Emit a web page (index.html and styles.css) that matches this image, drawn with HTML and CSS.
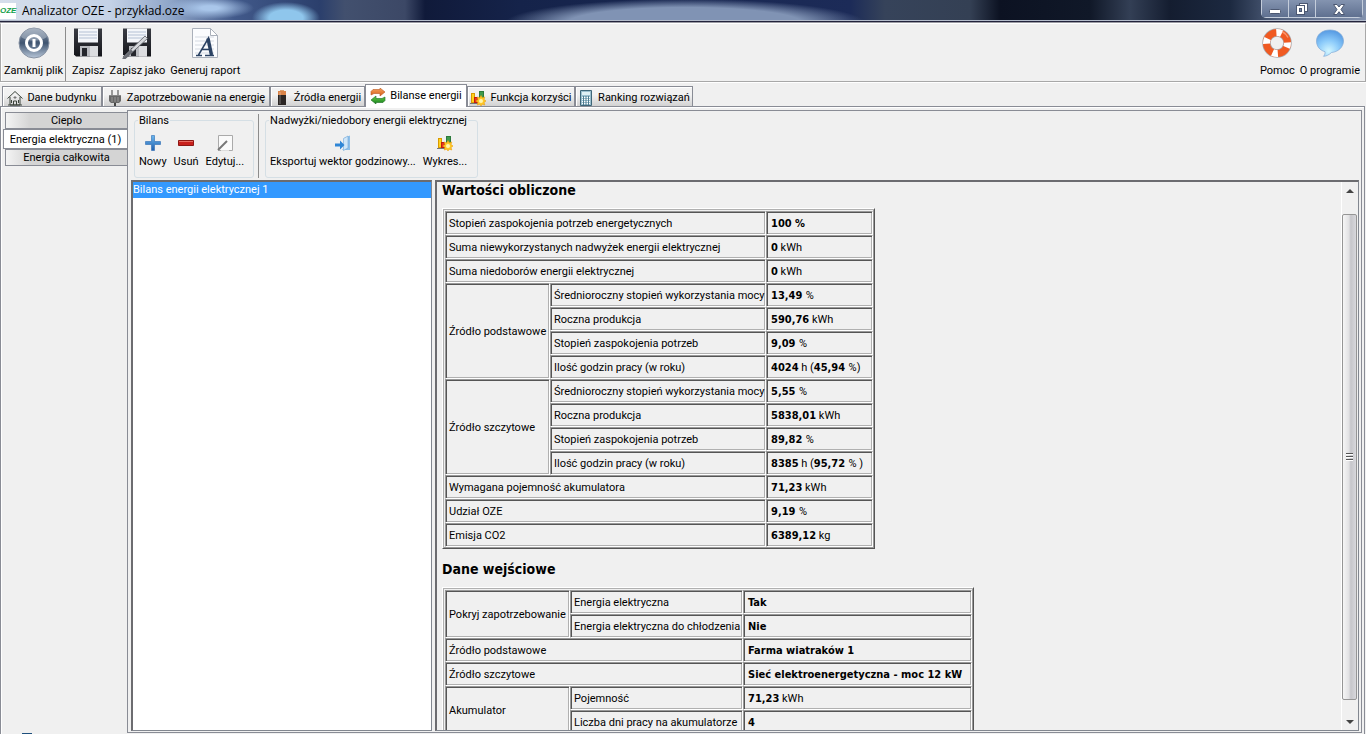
FILE: index.html
```html
<!DOCTYPE html>
<html lang="pl">
<head>
<meta charset="utf-8">
<title>Analizator OZE - przykład.oze</title>
<link rel="stylesheet" href="styles.css">
</head>
<body>
<svg class="defs" width="0" height="0" aria-hidden="true">
  <defs>
    <linearGradient id="steel" x1="0" y1="0" x2="0" y2="1"><stop offset="0" stop-color="#8e9bad"/><stop offset=".5" stop-color="#3f5470"/><stop offset="1" stop-color="#b7c6d8"/></linearGradient>
    <linearGradient id="disk" x1="0" y1="0" x2="0" y2="1"><stop offset="0" stop-color="#3a3c44"/><stop offset="1" stop-color="#15161b"/></linearGradient>
    <linearGradient id="orange" x1="0" y1="0" x2="0" y2="1"><stop offset="0" stop-color="#f6a35c"/><stop offset="1" stop-color="#d8601c"/></linearGradient>
    <linearGradient id="green" x1="0" y1="0" x2="0" y2="1"><stop offset="0" stop-color="#6ccf4a"/><stop offset="1" stop-color="#12801c"/></linearGradient>
    <linearGradient id="blue" x1="0" y1="0" x2="0" y2="1"><stop offset="0" stop-color="#6bb8ef"/><stop offset="1" stop-color="#1f5fae"/></linearGradient>
    <radialGradient id="bubble" cx=".45" cy=".8" r=".8"><stop offset="0" stop-color="#d2f6ff"/><stop offset=".5" stop-color="#8ccbfa"/><stop offset="1" stop-color="#5599e2"/></radialGradient>
    <symbol id="chart" viewBox="0 0 16 16">
      <path d="M0 13.500h12" stroke="#777" />
      <rect x="1.500" y="3.500" width="3" height="9" fill="#ffd21f" stroke="#d99a00"/>
      <rect x="4.500" y="7.500" width="3" height="5" fill="#e8391f" stroke="#c11a10"/>
      <rect x="9.500" y="1.500" width="4" height="9" fill="#3f9a4c" stroke="#2c7a3c"/>
      <path d="M11 5.500l1.200 2.300 2.600-.8-.8 2.500 2 1.500-2 1.500.8 2.500-2.600-.8L11 16l-1.200-1.800-2.600.8.800-2.500-2-1.500 2-1.500-.8-2.500 2.600.8z" fill="#ffc928" stroke="#eda010" stroke-width=".6"/>
      <circle cx="11" cy="11" r="2" fill="#fff6b0"/>
    </symbol>
    <symbol id="floppy" viewBox="0 0 32 32">
      <path d="M2 1.500h28v28H4l-2-2z" fill="url(#disk)"/>
      <path d="M6 1.500h20v14H6z" fill="#f4f6fa"/>
      <path d="M7 5h18M7 8h18M7 11h18" stroke="#b4c0d4"/>
      <path d="M8 19h18v10.500H8z" fill="#b9bbc0"/><path d="M10 21h5v8h-5z" fill="#24262c"/><path d="M18 19h8v10.500h-8z" fill="#dcdde0"/>
    </symbol>
  </defs>
</svg>

<div class="window">
  <header class="titlebar">
    <span class="app-icon">OZE</span>
    <h1 class="title">Analizator OZE - przykład.oze</h1>
    <div class="window-buttons">
      <button class="win-btn" aria-label="Minimalizuj"><svg width="14" height="14" viewBox="0 0 14 14"><rect x="1.500" y="7.500" width="11" height="4" rx="1" fill="#fff" stroke="#4c5872"/></svg></button>
      <button class="win-btn" aria-label="Przywróć"><svg width="14" height="14" viewBox="0 0 14 14" fill="#fff" stroke="#4c5872"><rect x="4.500" y="1.500" width="8" height="8"/><rect x="1.500" y="3.500" width="8" height="9"/><rect x="4.500" y="6.500" width="2" height="3" fill="#7385a5"/></svg></button>
      <button class="win-btn win-close" aria-label="Zamknij"><svg width="14" height="14" viewBox="0 0 14 14"><path d="M1.500 2.500h3.500l2 2.500 2-2.500h3.500L9 7.500l3.500 5H9l-2-2.800-2 2.800H1.500L5 7.500z" fill="#fff" stroke="#4c5872"/></svg></button>
    </div>
  </header>

  <nav class="toolbar">
    <button class="tool"><svg width="32" height="32" viewBox="0 0 32 32"><circle cx="16" cy="16" r="15" fill="url(#steel)" stroke="#8792a3"/><path d="M3 10a14 14 0 0 1 26 0c-8 5-18 5-26 0z" fill="#d3dae4" opacity=".4"/><circle cx="16" cy="16" r="7.500" fill="none" stroke="#fff" stroke-width="3"/><path d="M16 12v8" stroke="#fff" stroke-width="3"/></svg>Zamknij plik</button>
    <span class="divider"></span>
    <button class="tool"><svg width="32" height="32"><use href="#floppy"/></svg>Zapisz</button>
    <button class="tool"><svg width="32" height="32" viewBox="0 0 32 32"><use href="#floppy"/><path d="M2 30L24 9l2.500 2.500L5 31z" fill="#d6d8dc" stroke="#5a5d64" stroke-width=".8"/><path d="M1 31.500l9-9 2 2-8 8z" fill="#6a6d74"/></svg>Zapisz jako</button>
    <button class="tool"><svg width="32" height="32" viewBox="0 0 32 32"><path d="M3.500 1.500h18l7 7v22h-25z" fill="#fbfcfe" stroke="#aab0ba"/><path d="M21.500 1.500v7h7z" fill="#fff" stroke="#aab0ba"/><path d="M6 10h19M6 14h19M6 18h19M6 22h19M6 26h19" stroke="#d5dae2"/><path d="M7 28.500h6M16 28.500h9M9.500 28L19.500 11l2.500 17M12.500 22.500h8" fill="none" stroke="#2b4263" stroke-width="1.500"/><path d="M19 11.500L22.500 28" stroke="#2b4263" stroke-width="3.500"/></svg>Generuj raport</button>
    <span class="spacer"></span>
    <button class="tool"><svg width="32" height="32" viewBox="0 0 32 32"><circle cx="16" cy="16" r="10.500" fill="none" stroke="#a9a9ad" stroke-width="8.500"/><circle cx="16" cy="16" r="10.500" fill="none" stroke="#f05a22" stroke-width="7"/><circle cx="16" cy="16" r="10.500" fill="none" stroke="#fff" stroke-width="7" stroke-dasharray="5.500 10.993" stroke-dashoffset="1"/><path d="M21 4.500q4 2 6 6" fill="none" stroke="#ffb08c" stroke-width="1.500" opacity=".7"/></svg>Pomoc</button>
    <button class="tool"><svg width="32" height="32" viewBox="0 0 32 32"><path d="M16 3c8 0 13.500 4.800 13.500 11S24 25 17.500 25.500C15 28 12 29.300 9.500 29.300c1.300-1.300 1.800-3 1.500-4.600C6 23.400 2.500 19.500 2.500 14 2.500 7.800 8 3 16 3z" fill="url(#bubble)" stroke="#7fa9d6" stroke-width=".7"/></svg>O programie</button>
  </nav>

  <nav class="tabs">
    <button class="tab tab-a"><svg width="16" height="16" viewBox="0 0 16 16" fill="none" stroke="#3c453c"><path d="M.5 8.500L8 1.500l7.500 7M3 7v8h10V7M1 15h14"/><path d="M8 6v3M6.500 7.500h3" stroke="#777"/><path d="M6.500 15v-4h3v4M4.500 10v3M11.500 10v3"/></svg>Dane budynku</button>
    <button class="tab tab-b"><svg width="16" height="16" viewBox="0 0 16 16"><path d="M4 0h2v5H4zM10 0h2v5h-2z" fill="#999"/><path d="M2 5h12v6l-2 2H4l-2-2z" fill="#686868"/><path d="M2 5.500h12" stroke="#888"/><path d="M5 7v5M8 7v5M11 7v5" stroke="#999"/><path d="M7 13h2v3H7z" fill="#444"/></svg>Zapotrzebowanie na energię</button>
    <button class="tab tab-c"><svg width="16" height="16" viewBox="0 0 16 16"><path d="M6 0h4v2H6z" fill="#d8a070"/><path d="M4 1h8v4H4z" fill="#d98348"/><path d="M4 5h8v10H4z" fill="#2a2523"/><path d="M6 2v12" stroke="#fff" opacity=".35"/></svg>Źródła energii</button>
    <button class="tab tab-d active"><svg width="16" height="16" viewBox="0 0 16 16"><path d="M1 7V3.500L3 1.500h7V0l5 4-5 4V5.500H4z" fill="url(#orange)" stroke="#b8561e" stroke-width=".6"/><path d="M15 9v3.500l-2 2H6V16l-5-4 5-4v2.500h6z" fill="url(#green)" stroke="#1a6a1f" stroke-width=".6"/></svg>Bilanse energii</button>
    <button class="tab tab-e"><svg width="16" height="16"><use href="#chart"/></svg>Funkcja korzyści</button>
    <button class="tab tab-f"><svg width="16" height="16" viewBox="0 0 16 16"><path d="M2.500.5h11v15h-11z" fill="#9cc0cf" stroke="#3f6678"/><path d="M4 2h8v3H4z" fill="#e0f0f4"/><path d="M4 7.500h8M4 9.500h8M4 11.500h8M4 13.500h8" stroke="#fff"/><path d="M5.500 6v9M8 6v9M10.500 6v9" stroke="#4f7d90"/></svg>Ranking rozwiązań</button>
  </nav>

  <main class="page">
    <nav class="side">
      <button class="side-tab">Ciepło</button>
      <button class="side-tab side-active">Energia elektryczna (1)</button>
      <button class="side-tab">Energia całkowita</button>
      <span class="hint-dot"></span>
    </nav>

    <section class="content">
      <div class="groups">
        <fieldset class="group"><legend>Bilans</legend>
          <button class="action"><svg width="16" height="16" viewBox="0 0 16 16"><path d="M6.500.5h3v6h6v3h-6v6h-3v-6h-6v-3h6z" fill="url(#blue)" stroke="#2c6cb4" stroke-width=".6"/></svg>Nowy</button>
          <button class="action"><svg width="16" height="16" viewBox="0 0 16 16"><path d="M.5 5.500h15v5H.5z" fill="#c8201c" stroke="#8d1714"/><path d="M1 6.500h14" stroke="#e86a60"/></svg>Usuń</button>
          <button class="action"><svg width="16" height="16" viewBox="0 0 16 16"><path d="M1.500.5h14v15h-14z" fill="#fafafa" stroke="#aaa"/><path d="M1 15l9-9" stroke="#777" stroke-width="2"/><path d="M4 15.500h8" stroke="#ddd"/></svg>Edytuj...</button>
        </fieldset>
        <span class="divider"></span>
        <fieldset class="group"><legend>Nadwyżki/niedobory energii elektrycznej</legend>
          <button class="action"><svg width="16" height="16" viewBox="0 0 16 16"><path d="M9 3l6-2.500V15H7v-1l2 1.500z" fill="#8dbfe8"/><path d="M8.500 3.500L13 1v12l-4.500 2.500z" fill="#cfe6f8" stroke="#6ea6d8" stroke-width=".6"/><path d="M0 8.500h5V5.500l4.500 4.500L5 14.500v-3H0z" fill="#2f86d6"/></svg>Eksportuj wektor godzinowy...</button>
          <button class="action"><svg width="16" height="16"><use href="#chart"/></svg>Wykres...</button>
        </fieldset>
      </div>

      <div class="split">
        <ul class="list"><li class="selected">Bilans energii elektrycznej 1</li></ul>

        <div class="report">
          <article class="report-body">
            <h2>Wartości obliczone</h2>
            <table class="data computed">
              <colgroup><col class="c1"><col class="c2"><col class="c3"></colgroup>
              <tr><td colspan="2">Stopień zaspokojenia potrzeb energetycznych</td><td><b>100 %</b></td></tr>
              <tr><td colspan="2">Suma niewykorzystanych nadwyżek energii elektrycznej</td><td><b>0</b> kWh</td></tr>
              <tr><td colspan="2">Suma niedoborów energii elektrycznej</td><td><b>0</b> kWh</td></tr>
              <tr><td rowspan="4">Źródło podstawowe</td><td>Średnioroczny stopień wykorzystania mocy</td><td><b>13,49 </b>%</td></tr>
              <tr><td>Roczna produkcja</td><td><b>590,76</b> kWh</td></tr>
              <tr><td>Stopień zaspokojenia potrzeb</td><td><b>9,09 </b>%</td></tr>
              <tr><td>Ilość godzin pracy (w roku)</td><td><b>4024</b> h (<b>45,94 </b>%)</td></tr>
              <tr><td rowspan="4">Źródło szczytowe</td><td>Średnioroczny stopień wykorzystania mocy</td><td><b>5,55 </b>%</td></tr>
              <tr><td>Roczna produkcja</td><td><b>5838,01</b> kWh</td></tr>
              <tr><td>Stopień zaspokojenia potrzeb</td><td><b>89,82 </b>%</td></tr>
              <tr><td>Ilość godzin pracy (w roku)</td><td><b>8385</b> h (<b>95,72 </b>% )</td></tr>
              <tr><td colspan="2">Wymagana pojemność akumulatora</td><td><b>71,23</b> kWh</td></tr>
              <tr><td colspan="2">Udział OZE</td><td><b>9,19 </b>%</td></tr>
              <tr><td colspan="2">Emisja CO2</td><td><b>6389,12</b> kg</td></tr>
            </table>
            <h2>Dane wejściowe</h2>
            <table class="data input">
              <colgroup><col class="d1"><col class="d2"><col class="d3"></colgroup>
              <tr><td rowspan="2">Pokryj zapotrzebowanie</td><td>Energia elektryczna</td><td><b>Tak</b></td></tr>
              <tr><td>Energia elektryczna do chłodzenia</td><td><b>Nie</b></td></tr>
              <tr><td colspan="2">Źródło podstawowe</td><td><b>Farma wiatraków 1</b></td></tr>
              <tr><td colspan="2">Źródło szczytowe</td><td><b>Sieć elektroenergetyczna - moc 12 kW</b></td></tr>
              <tr><td rowspan="2">Akumulator</td><td>Pojemność</td><td><b>71,23</b> kWh</td></tr>
              <tr><td>Liczba dni pracy na akumulatorze</td><td><b>4</b></td></tr>
            </table>
          </article>
          <div class="scrollbar">
            <button class="arrow" aria-label="W górę"><svg width="8" height="4" viewBox="0 0 8 4"><path d="M0 4l4-4 4 4z" fill="#444"/></svg></button>
            <div class="track"><div class="thumb"><span></span><span></span><span></span></div></div>
            <button class="arrow" aria-label="W dół"><svg width="8" height="4" viewBox="0 0 8 4"><path d="M0 0l4 4 4-4z" fill="#444"/></svg></button>
          </div>
        </div>
      </div>
    </section>
  </main>
</div>
</body>
</html>
```
FILE: styles.css
```css
* { box-sizing: border-box; }

html, body { height: 100%; margin: 0; overflow: hidden; }

body {
  background: #f0f0f0;
  color: #000;
  font: 11px/14px Roboto, "DejaVu Sans Condensed", sans-serif;
}

button {
  padding: 0;
  border: 0;
  background: none;
  color: inherit;
  font: inherit;
  white-space: nowrap;
}

b, h2 { font-family: "DejaVu Sans Condensed", "DejaVu Sans", sans-serif; }

svg { display: block; flex: none; }
.defs { position: absolute; }

.window { display: flex; flex-direction: column; height: 100vh; }

/* Title bar */
.titlebar {
  display: flex;
  align-items: center;
  height: 23px;
  flex: none;
  border-bottom: 1px solid #9c9ca4;
  box-shadow: inset 0 -1px #23233c, inset 0 -2px #b4bccb;
  background:
    radial-gradient(ellipse 34px 16px at 286px 18px, #8fc6ec 50%, transparent 100%),
    radial-gradient(ellipse 44px 11px at 210px 8px, #a9c6ea 20%, transparent 100%),
    radial-gradient(ellipse 180px 24px at 685px 23px, #8093b4 65%, transparent 100%),
    linear-gradient(90deg, #d5deeb 0, #c4d2e6 110px, #8fa6c9 170px, #41598a 235px, #2b3f6c 320px, #42506e 345px, #3c4866 405px, #101a3a 425px, #15234a 520px, #1c2b58 850px, #36435a 885px, #344054 970px, #0c1222 1000px, #101828 1090px, #333f55 1130px, #141d30 1170px, #1c2940 1230px, #53627f 1280px, #8291ad 100%);
}
.app-icon {
  width: 16px;
  height: 16px;
  background: #fff;
  color: #12a04a;
  font: italic bold 8px/16px "Liberation Sans", sans-serif;
  text-align: center;
}
.title {
  flex: 1;
  margin: 0 0 0 6px;
  font: 12px/20px "Open Sans", sans-serif;
}
.window-buttons {
  display: flex;
  align-self: flex-start;
  height: 18px;
  margin-right: 3px;
  border: 1px solid #c4cddb;
  border-top: 0;
  border-radius: 0 0 5px 5px;
}
.win-btn {
  display: flex;
  align-items: center;
  justify-content: center;
  width: 27px;
  background: linear-gradient(#8494b0, #5f7090);
  border-right: 1px solid #c4cddb;
}
.win-close { width: 46px; border-right: 0; }

/* Main toolbar */
.toolbar {
  display: flex;
  height: 59px;
  flex: none;
  padding: 3px 5px 0 3px;
  border: 1px solid #a8a8a8;
  border-top-color: #fff;
  box-shadow: 0 1px #fff, inset 1px 0 #fff;
}
.tool {
  display: flex;
  flex-direction: column;
  align-items: center;
  gap: 5px;
  height: 51px;
  margin-right: 5px;
}
.tool:last-child { margin-right: 0; }
.spacer { flex: 1; }
.divider { width: 1px; background: #8c8c8c; margin-right: 6px; }
.tool + .divider { margin-left: -3px; }

/* Tab strip */
.tabs {
  display: flex;
  align-items: flex-end;
  height: 24px;
  flex: none;
  padding-left: 2px;
}
.tab {
  display: flex;
  align-items: center;
  justify-content: center;
  gap: 4px;
  height: 20px;
  padding-top: 2px;
  border: 1px solid #898c95;
  border-bottom: 0;
  background: linear-gradient(#f2f2f2 40%, #d2d2d2);
  box-shadow: inset 1px 1px #fff;
}
.tab-a { width: 100px; }
.tab-b { width: 168px; }
.tab-c { width: 95px; }
.tab-d { width: 102px; }
.tab-e { width: 108px; }
.tab-f { width: 118px; }
.tab.active { height: 23px; margin-bottom: -1px; padding: 0 0 1px; background: #fff; z-index: 1; }

/* Page frame */
.page {
  display: grid;
  grid-template-columns: 126px 1fr;
  flex: 1;
  min-height: 0;
  margin-right: 1px;
  padding: 3px 2px 0 0;
  border: 1px solid #898c95;
  border-bottom: 0;
  box-shadow: inset 1px 1px #fff;
}
.side {
  display: flex;
  flex-direction: column;
  align-items: flex-end;
  padding-top: 2px;
  overflow: hidden;
}
.side-tab {
  width: 122px;
  height: 17px;
  border: 1px solid #898c95;
  border-right: 0;
  background: linear-gradient(90deg, #f4f4f4, #d4d4d4 20%, #d4d4d4);
}
.side-active { width: 124px; height: 20px; padding-top: 1px; background: #fff; }
.hint-dot {
  width: 10px;
  height: 1px;
  margin: auto 95px 0 0;
  background: #1d4f7c;
}
.content {
  display: flex;
  flex-direction: column;
  min-width: 0;
  min-height: 0;
  margin-bottom: 1px;
  border: 1px solid #898c95;
}

/* Grouped actions */
.groups { display: flex; height: 69px; flex: none; padding: 3px 0 2px 6px; }
.group {
  display: flex;
  gap: 7px;
  margin: 0 4px 0 0;
  padding: 8px 9px 0 4px;
  border: 1px solid #d5dfe5;
  border-radius: 3px;
  min-width: 0;
}
.group legend { padding: 1px 1px 0; line-height: 12px; margin-left: -1px; }
.action {
  display: flex;
  flex-direction: column;
  align-items: center;
  gap: 4px;
  height: 36px;
}

/* List and report */
.split {
  display: grid;
  grid-template-columns: 301px 1fr;
  gap: 3px;
  flex: 1;
  min-height: 0;
  padding: 0 2px 1px 3px;
}
.list {
  margin: 0;
  padding: 0;
  border: 1px solid #828790;
  border-top: 2px solid #6c6c70;
  border-left: 2px solid #6c6c70;
  background: #fff;
  list-style: none;
}
.selected { height: 16px; line-height: 16px; background: #3399ff; color: #fff; }
.report {
  display: flex;
  min-height: 0;
  border: 1px solid #828790;
  border-top: 2px solid #6c6c70;
  border-left: 2px solid #6c6c70;
}
.report-body { flex: 1; padding-left: 5px; overflow: hidden; }
.report h2 { margin: 0 0 9px; font-size: 14px; line-height: 17px; }
.data + h2 { margin-top: 12px; }

.data {
  table-layout: fixed;
  border-spacing: 0;
  padding: 2px 1px 1px 2px;
  border: 1px solid;
  border-color: #fff #555 #555 #fff;
  box-shadow: inset 1px 1px #b0b0b0, inset -1px -1px #999;
}
.computed { width: 433px; }
.input { width: 532px; }
.c1 { width: 105px; }
.c2 { width: 216px; }
.d1 { width: 125px; }
.d2 { width: 173px; }
.data td {
  height: 24px;
  padding: 1px 3px 0;
  border: 1px solid;
  border-color: #999 #fff #fff #999;
  box-shadow: inset 1px 1px #555, inset -1px -1px #b0b0b0;
  white-space: nowrap;
}
.data td:last-child { padding-left: 4px; }

.scrollbar {
  display: flex;
  flex-direction: column;
  width: 17px;
  border-left: 1px solid #fff;
  background: #f0f0f0;
}
.arrow { display: flex; align-items: center; justify-content: center; height: 17px; }
.track { display: flex; flex: 1; padding: 15px 0 13px; }
.thumb {
  display: flex;
  flex-direction: column;
  align-items: center;
  justify-content: center;
  gap: 1px;
  width: 15px;
  border: 1px solid #959595;
  border-radius: 2px;
  background: linear-gradient(90deg, #f6f6f6, #e2e2e4 45%, #c6c6ca 60%, #d8d8dc);
}
.thumb span { width: 7px; height: 2px; background: linear-gradient(#555 50%, #fff 50%); }
```
